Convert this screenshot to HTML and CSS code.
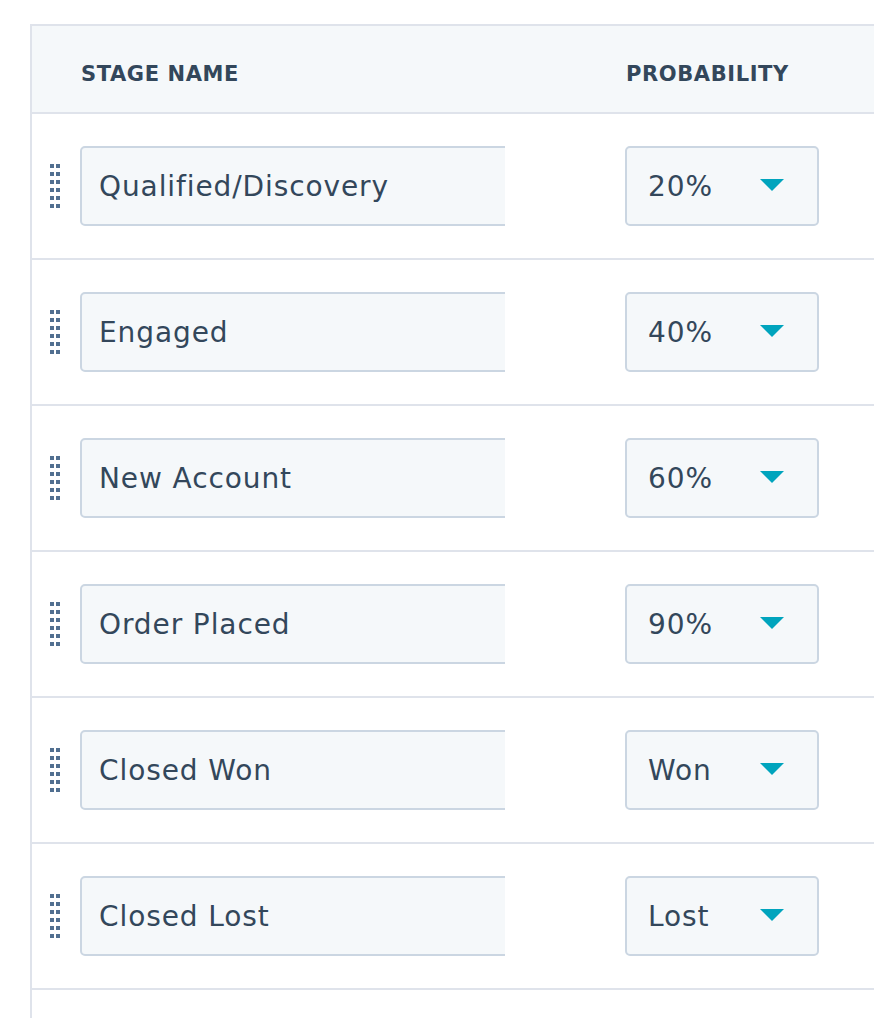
FILE: index.html
```html
<!DOCTYPE html>
<html>
<head>
<meta charset="utf-8">
<link rel="stylesheet" href="styles.css">
</head>
<body>
<div class="table">
  <div class="row head">
    <div class="cell name"><span class="th">Stage name</span></div>
    <div class="cell prob"><span class="th">Probability</span></div>
  </div>
  <div class="row">
    <div class="handle"><i></i><i></i><i></i><i></i><i></i><i></i><i></i><i></i><i></i><i></i><i></i><i></i></div>
    <div class="cell name"><div class="clip"><div class="input">Qualified/Discovery</div></div></div>
    <div class="cell prob"><div class="select"><span>20%</span><span class="caret"></span></div></div>
  </div>
  <div class="row">
    <div class="handle"><i></i><i></i><i></i><i></i><i></i><i></i><i></i><i></i><i></i><i></i><i></i><i></i></div>
    <div class="cell name"><div class="clip"><div class="input">Engaged</div></div></div>
    <div class="cell prob"><div class="select"><span>40%</span><span class="caret"></span></div></div>
  </div>
  <div class="row">
    <div class="handle"><i></i><i></i><i></i><i></i><i></i><i></i><i></i><i></i><i></i><i></i><i></i><i></i></div>
    <div class="cell name"><div class="clip"><div class="input">New Account</div></div></div>
    <div class="cell prob"><div class="select"><span>60%</span><span class="caret"></span></div></div>
  </div>
  <div class="row">
    <div class="handle"><i></i><i></i><i></i><i></i><i></i><i></i><i></i><i></i><i></i><i></i><i></i><i></i></div>
    <div class="cell name"><div class="clip"><div class="input">Order Placed</div></div></div>
    <div class="cell prob"><div class="select"><span>90%</span><span class="caret"></span></div></div>
  </div>
  <div class="row">
    <div class="handle"><i></i><i></i><i></i><i></i><i></i><i></i><i></i><i></i><i></i><i></i><i></i><i></i></div>
    <div class="cell name"><div class="clip"><div class="input">Closed Won</div></div></div>
    <div class="cell prob"><div class="select"><span>Won</span><span class="caret"></span></div></div>
  </div>
  <div class="row">
    <div class="handle"><i></i><i></i><i></i><i></i><i></i><i></i><i></i><i></i><i></i><i></i><i></i><i></i></div>
    <div class="cell name"><div class="clip"><div class="input">Closed Lost</div></div></div>
    <div class="cell prob"><div class="select"><span>Lost</span><span class="caret"></span></div></div>
  </div>
  <div class="row empty"></div>
</div>
</body>
</html>
```
FILE: styles.css
```css
html, body {
  margin: 0;
  padding: 0;
  background: #ffffff;
  overflow: hidden;
  height: 1018px;
}
body {
  font-family: "DejaVu Sans", "Open Sans", sans-serif;
  color: #33475b;
}
.table {
  margin: 24px 0 0 30px;
  width: 900px;
  border-left: 2px solid #dfe3eb;
  border-top: 2px solid #dfe3eb;
}
.row {
  position: relative;
  display: flex;
  align-items: center;
  height: 144px;
  border-bottom: 2px solid #dfe3eb;
}
.row.head {
  box-sizing: border-box;
  height: 88px;
  padding-top: 10px;
  background: #f5f8fa;
}
.cell.name {
  width: 545px;
  padding-left: 48px;
  box-sizing: border-box;
}
.cell.prob {
  padding-left: 48px;
}
.th {
  font-weight: 700;
  font-size: 21px;
  letter-spacing: 0.6px;
  text-transform: uppercase;
  padding-left: 1px;
}
.clip {
  width: 425px;
  overflow: hidden;
}
.input {
  width: 460px;
  height: 80px;
  box-sizing: border-box;
  border: 2px solid #cbd6e2;
  border-radius: 5px;
  background: #f5f8fa;
  display: flex;
  align-items: center;
  padding-left: 17px;
  font-size: 28px;
  letter-spacing: 0.9px;
}
.select {
  width: 194px;
  height: 80px;
  box-sizing: border-box;
  border: 2px solid #cbd6e2;
  border-radius: 5px;
  background: #f5f8fa;
  display: flex;
  align-items: center;
  justify-content: space-between;
  padding: 0 33px 0 21px;
  font-size: 28px;
  letter-spacing: 0.9px;
}
.caret {
  width: 0;
  height: 0;
  border-left: 12px solid transparent;
  border-right: 12px solid transparent;
  border-top: 12px solid #00a4bd;
  margin-top: -3px;
}
.handle {
  position: absolute;
  left: 18px;
  top: 50%;
  margin-top: -22px;
  display: grid;
  grid-template-columns: 4px 4px;
  column-gap: 2px;
  row-gap: 4px;
}
.handle i {
  display: block;
  width: 4px;
  height: 4px;
  background: #516f90;
}
```
